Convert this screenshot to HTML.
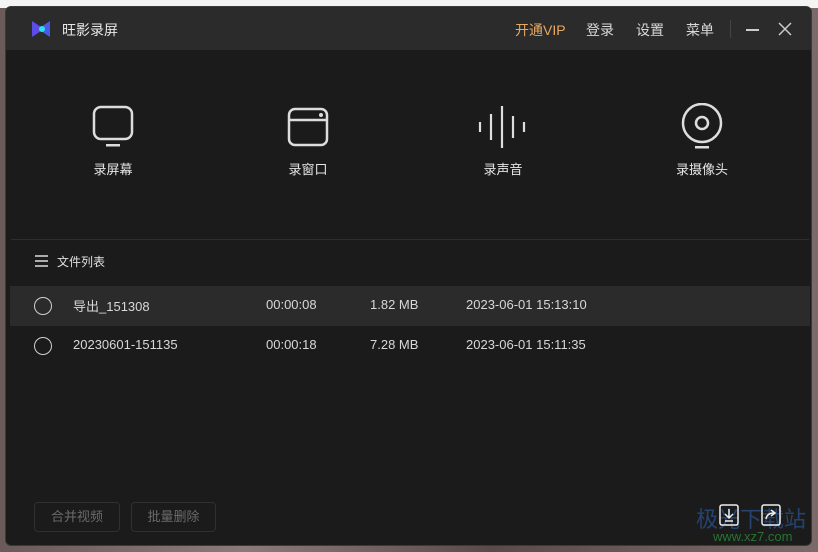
<!DOCTYPE html>
<html><head><meta charset="utf-8"><style>
*{margin:0;padding:0;box-sizing:border-box}
body{width:818px;height:552px;overflow:hidden;background:linear-gradient(90deg,#6a5a5a,#8a7a7a 30%,#5a4a4a 60%,#7a6a6a);font-family:"Liberation Sans","Noto Sans CJK SC",sans-serif;position:relative}
.top{position:absolute;left:0;top:0;width:818px;height:8px;background:#f4f4f4}
.win{position:absolute;left:5px;top:6px;width:807px;height:540px;background:#1b1b1b;border-radius:6px;overflow:hidden;border:1px solid #3a3a3a}
.tb{height:43px;background:#2b2b2b;position:relative;color:#d8d8d8;font-size:14px}
.tb span{position:absolute;top:13px}
.act{position:absolute;text-align:center;color:#e6e6e6;font-size:13px;width:120px}
.act svg{display:block;margin:0 auto 10px}
.row{position:absolute;left:4px;width:800px;height:40px;font-size:13px;color:#d8d8d8}
.row span{position:absolute;top:11px}
.row i{position:absolute;left:24px;top:11px;width:18px;height:18px;border:1.5px solid #d0d0d0;border-radius:50%}
.btn{position:absolute;top:495px;height:30px;border:1px solid #303030;border-radius:4px;color:#6a6a6a;font-size:13px;text-align:center;line-height:28px}
</style></head><body>
<div class="top"></div>
<div class="win">
 <div class="tb">
  <svg style="position:absolute;left:26px;top:14px" width="18" height="16" viewBox="0 0 18 16"><path d="M0 0L9 6V10L0 16Z" fill="#5b4ee8"/><path d="M18 0L9 6V10L18 16Z" fill="#4a5ae8"/><circle cx="10" cy="8" r="3" fill="#2ee0f0"/></svg>
  <span style="left:56px;color:#e8e8e8">旺影录屏</span>
  <span style="left:509px;color:#e8a860">开通VIP</span>
  <span style="left:580px">登录</span>
  <span style="left:630px">设置</span>
  <span style="left:680px">菜单</span>
  <div style="position:absolute;left:724px;top:13px;width:1px;height:18px;background:#444"></div>
  <div style="position:absolute;left:740px;top:22px;width:13px;height:1.5px;background:#ccc"></div>
  <svg style="position:absolute;left:772px;top:15px" width="14" height="14"><path d="M1 1L13 13M13 1L1 13" stroke="#ccc" stroke-width="1.5"/></svg>
 </div>
 <div class="act" style="left:47px;top:98px"><svg width="42" height="44" viewBox="0 0 42 44"><rect x="2" y="2" width="38" height="32" rx="7" fill="none" stroke="#ddd" stroke-width="2.5"/><rect x="14" y="39" width="14" height="2.5" fill="#ddd"/></svg>录屏幕</div>
 <div class="act" style="left:242px;top:100px"><svg width="42" height="42" viewBox="0 0 42 42"><rect x="2" y="2" width="38" height="36" rx="6" fill="none" stroke="#ddd" stroke-width="2.5"/><path d="M2 13H40" stroke="#ddd" stroke-width="2.5"/><circle cx="34" cy="8" r="2" fill="#ddd"/></svg>录窗口</div>
 <div class="act" style="left:437px;top:98px"><svg width="50" height="44" viewBox="0 0 50 44"><path d="M2 17V27M13 9V35M24 1V43M35 11V33M46 17V27" stroke="#ddd" stroke-width="2.2"/></svg>录声音</div>
 <div class="act" style="left:636px;top:96px"><svg width="42" height="46" viewBox="0 0 42 46"><ellipse cx="21" cy="20" rx="19" ry="19" fill="none" stroke="#ddd" stroke-width="2.5"/><circle cx="21" cy="20" r="6" fill="none" stroke="#ddd" stroke-width="2.5"/><rect x="14" y="43" width="14" height="2.5" fill="#ddd"/></svg>录摄像头</div>
 <div style="position:absolute;left:5px;top:232px;width:798px;height:1px;background:#2e2e2e"></div>
 <svg style="position:absolute;left:29px;top:248px" width="13" height="12"><path d="M0 1H13M0 6H13M0 11H13" stroke="#ddd" stroke-width="1.5"/></svg>
 <div style="position:absolute;left:51px;top:246px;font-size:12px;color:#e0e0e0">文件列表</div>
 <div class="row" style="top:279px;background:#2b2b2b"><i></i><span style="left:63px;top:10px">导出_151308</span><span style="left:256px">00:00:08</span><span style="left:360px">1.82 MB</span><span style="left:456px">2023-06-01 15:13:10</span></div>
 <div class="row" style="top:319px"><i></i><span style="left:63px">20230601-151135</span><span style="left:256px">00:00:18</span><span style="left:360px">7.28 MB</span><span style="left:456px">2023-06-01 15:11:35</span></div>
 <div class="btn" style="left:28px;width:86px">合并视频</div>
 <div class="btn" style="left:125px;width:85px">批量删除</div>
 <div style="position:absolute;left:690px;top:495px;font-size:22px;color:#2a5fa8;opacity:.6">极光下载站</div>
 <div style="position:absolute;left:707px;top:522px;font-size:13px;color:#2a8a3a;opacity:.8">www.xz7.com</div>
 <svg style="position:absolute;left:713px;top:497px" width="20" height="22"><rect x="1" y="1" width="18" height="20" rx="2" fill="none" stroke="#eee" stroke-width="1.5"/><path d="M10 5V13M6 10L10 14L14 10M6 17H14" stroke="#eee" stroke-width="1.5" fill="none"/></svg>
 <svg style="position:absolute;left:755px;top:497px" width="20" height="22"><rect x="1" y="1" width="18" height="20" rx="2" fill="none" stroke="#eee" stroke-width="1.5"/><path d="M5 15Q6 9 13 9M10 6L14 9L10 12" stroke="#eee" stroke-width="1.5" fill="none"/></svg>
</div>
</body></html>
